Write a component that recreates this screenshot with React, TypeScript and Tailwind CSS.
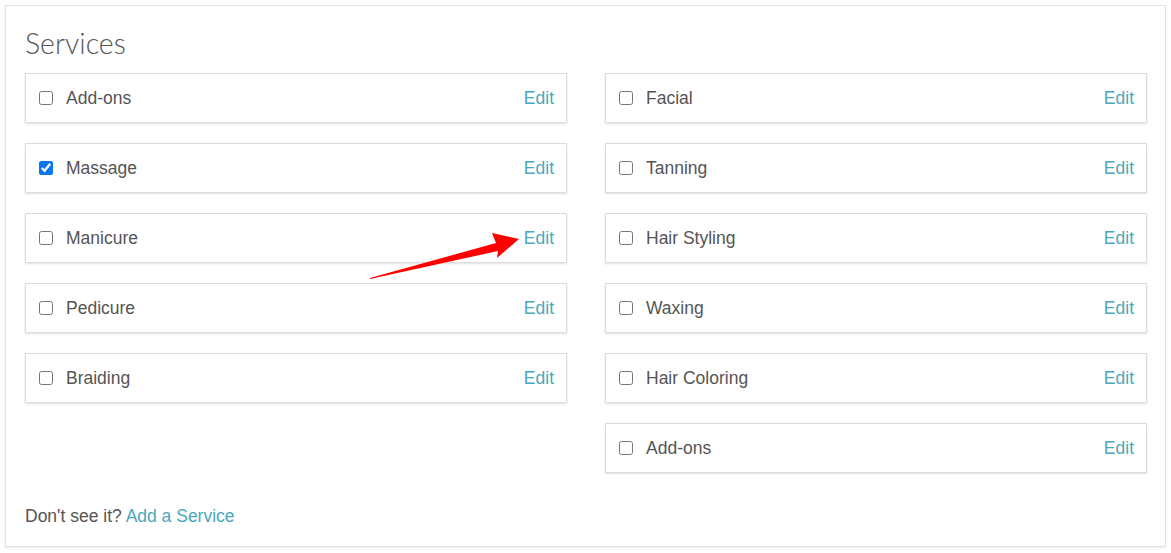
import React, { useState } from "react";

const leftServices = ["Add-ons", "Massage", "Manicure", "Pedicure", "Braiding"];
const rightServices = ["Facial", "Tanning", "Hair Styling", "Waxing", "Hair Coloring", "Add-ons"];

const ServiceRow: React.FC<{ name: string; defaultChecked?: boolean }> = ({ name, defaultChecked }) => {
  const [checked, setChecked] = useState<boolean>(!!defaultChecked);
  return (
    <div className="h-[50px] flex items-center justify-between border border-[#dcdcdc] shadow-[0_1px_2px_rgba(0,0,0,0.12)] bg-white pl-[13px] pr-[12px]">
      <label className="flex items-center gap-[13px] text-[17.5px] text-[#555]">
        <input
          type="checkbox"
          checked={checked}
          onChange={() => setChecked(!checked)}
          className="w-[14px] h-[14px] m-0 accent-[#0b75f1]"
        />
        {name}
      </label>
      <a href="#" className="text-[17.5px] text-[#4aa8ba]">
        Edit
      </a>
    </div>
  );
};

export default function App() {
  return (
    <div className="w-[1171px] h-[553px] bg-white pt-[5px] pl-[5px] font-['Liberation_Sans',Arial,sans-serif]">
      <div className="relative w-[1161px] h-[542px] border border-[#e2e2e2] shadow-[0_1px_2px_rgba(0,0,0,0.08)] pl-[19px] pr-[18px] pt-[19px]">
        <h2 className="font-['Lato',sans-serif] font-light text-[28.5px] leading-[36px] text-[#555] mb-[12px]">Services</h2>
        <div className="grid grid-cols-2 gap-x-[38px]">
          <div className="flex flex-col gap-[20px]">
            {leftServices.map((s, i) => (
              <ServiceRow key={i} name={s} defaultChecked={s === "Massage"} />
            ))}
          </div>
          <div className="flex flex-col gap-[20px]">
            {rightServices.map((s, i) => (
              <ServiceRow key={i} name={s} />
            ))}
          </div>
        </div>
        <p className="mt-[30px] text-[17.5px] text-[#555]">
          Don't see it? <a href="#" className="text-[#4aa8ba]">Add a Service</a>
        </p>
        <svg className="absolute left-[354px] top-[216px] pointer-events-none" width="170" height="70" viewBox="0 0 170 70">
          <polygon points="10,56 136,21 132,11 159,17 137,36 138,29 10,57" fill="#ff0000" />
        </svg>
      </div>
    </div>
  );
}
